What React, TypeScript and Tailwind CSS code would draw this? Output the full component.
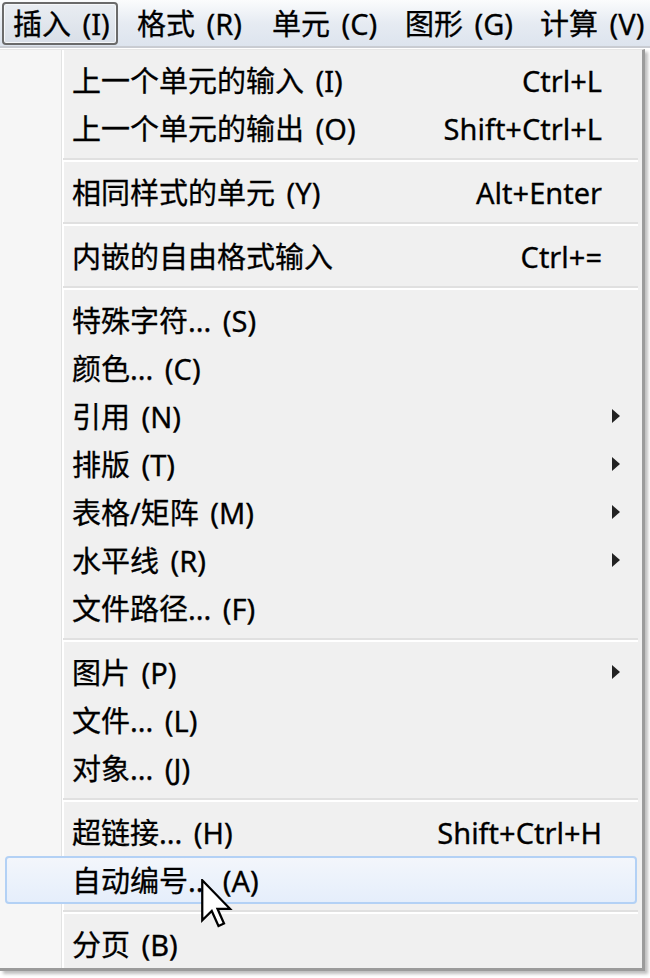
import React from 'react';

type Entry =
  | { kind: 'item'; label: string; shortcut?: string; submenu?: boolean; active?: boolean }
  | { kind: 'sep' };

// menu bar entries, first one is the pressed (open) menu
const MENU_BAR = [
  { label: '插入 (I)', cls: 'w-[116px] mr-[8px] pl-[9px] rounded-[4px] border-2 border-[#6a6a6a] bg-gradient-to-b from-[#e9edf2] to-[#d9dfe8] shadow-[inset_0_0_0_1px_#f6f8fa]' },
  { label: '格式 (R)', cls: 'w-[135px] pl-[11px]' },
  { label: '单元 (C)', cls: 'w-[133px] pl-[11px]' },
  { label: '图形 (G)', cls: 'w-[135px] pl-[11px]' },
  { label: '计算 (V)', cls: 'w-[120px] pl-[11px]' },
];

const ENTRIES: Entry[] = [
  { kind: 'item', label: '上一个单元的输入 (I)', shortcut: 'Ctrl+L' },
  { kind: 'item', label: '上一个单元的输出 (O)', shortcut: 'Shift+Ctrl+L' },
  { kind: 'sep' },
  { kind: 'item', label: '相同样式的单元 (Y)', shortcut: 'Alt+Enter' },
  { kind: 'sep' },
  { kind: 'item', label: '内嵌的自由格式输入', shortcut: 'Ctrl+=' },
  { kind: 'sep' },
  { kind: 'item', label: '特殊字符... (S)' },
  { kind: 'item', label: '颜色... (C)' },
  { kind: 'item', label: '引用 (N)', submenu: true },
  { kind: 'item', label: '排版 (T)', submenu: true },
  { kind: 'item', label: '表格/矩阵 (M)', submenu: true },
  { kind: 'item', label: '水平线 (R)', submenu: true },
  { kind: 'item', label: '文件路径... (F)' },
  { kind: 'sep' },
  { kind: 'item', label: '图片 (P)', submenu: true },
  { kind: 'item', label: '文件... (L)' },
  { kind: 'item', label: '对象... (J)' },
  { kind: 'sep' },
  { kind: 'item', label: '超链接... (H)', shortcut: 'Shift+Ctrl+H' },
  { kind: 'item', label: '自动编号... (A)', active: true },
  { kind: 'sep' },
  { kind: 'item', label: '分页 (B)' },
];

function SubArrow() {
  return (
    <svg width="8" height="14" viewBox="0 0 8 14" className="ml-[10px]">
      <polygon points="0,0 8,7 0,14" fill="#222" />
    </svg>
  );
}

function Cursor() {
  // classic windows arrow, scaled up
  return (
    <svg
      width="32"
      height="50"
      viewBox="0 0 12.8 20"
      className="absolute left-[201px] top-[879px]"
    >
      <polygon
        points="0.5,0.5 0.5,16.5 4.3,12.8 7,18.8 9.2,17.8 6.6,11.9 11.6,11.9"
        fill="#fff"
        stroke="#000"
        strokeWidth="0.9"
        strokeLinejoin="miter"
      />
    </svg>
  );
}

export default function App() {
  return (
    <div
      className="relative w-[650px] h-[978px] overflow-hidden bg-white text-black text-[29px] leading-none [word-spacing:4px] [-webkit-text-stroke:0.3px_#000]"
      style={{ fontFamily: '"Noto Sans", "Noto Sans CJK SC", sans-serif' }}
    >
      {/* Menu bar */}
      <div className="flex items-center h-[48px] pl-[2px] bg-gradient-to-b from-[#fbfcfd] via-[#e6ebf2] to-[#dde4ee] border-b-2 border-[#c9ccd2]">
        {MENU_BAR.map((m) => (
          <div key={m.label} className={'flex items-center h-[43px] shrink-0 whitespace-nowrap ' + m.cls}>
            {m.label}
          </div>
        ))}
      </div>

      {/* Drop-down */}
      <div className="w-[645px] mt-[1px] pt-[6px] border-t border-[#e6e6e6] border-r-[3px] border-b-[3px] border-r-[#9b9b9b] border-b-[#9b9b9b] shadow-[3px_3px_3px_rgba(0,0,0,0.25)] bg-[linear-gradient(to_right,#f6f6f6_0,#f6f6f6_61px,#e2e3e3_61px,#e2e3e3_62px,#ffffff_62px,#ffffff_64px,#f0f0f0_64px)]">
        {ENTRIES.map((e, i) =>
          e.kind === 'sep' ? (
            <div key={i} className="h-[16px] flex flex-col justify-center pl-[63px] pr-[4px]">
              <div className="h-[2px] bg-[#e0e0e0]" />
              <div className="h-[2px] bg-white" />
            </div>
          ) : (
            <div
              key={i}
              className={
                e.active
                  ? 'flex items-center h-[48px] mx-[5px] pl-[65px] rounded-[4px] border-2 border-[#b3d1f5] bg-gradient-to-b from-[#f3f6fb] to-[#e5eefb]'
                  : 'flex items-center h-[48px] pl-[72px]'
              }
            >
              <span className="flex-1 whitespace-nowrap">{e.label}</span>
              {e.shortcut && <span className="whitespace-nowrap">{e.shortcut}</span>}
              <span className={(e.active ? 'w-[33px]' : 'w-[40px]') + ' shrink-0 flex items-center'}>
                {e.submenu && <SubArrow />}
              </span>
            </div>
          )
        )}
      </div>

      <Cursor />
    </div>
  );
}
